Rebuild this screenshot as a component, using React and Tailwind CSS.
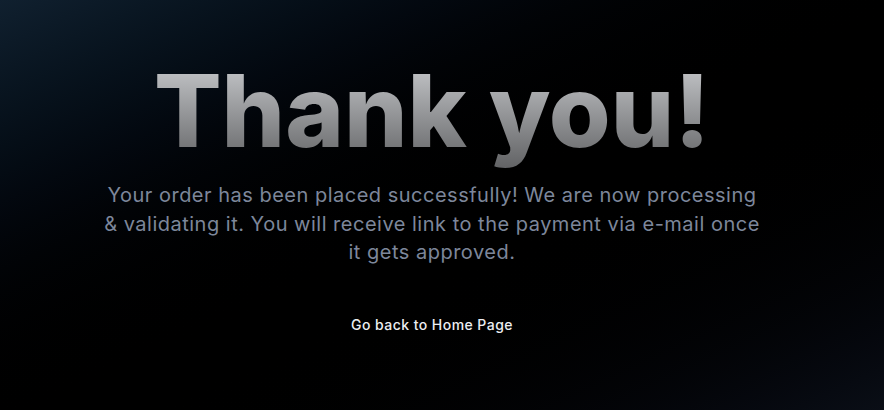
export default function App() {
  return (
    <div className="min-h-screen w-full bg-gradient-to-br from-[#10202f] via-black via-55% to-[#0a0e16] flex flex-col items-center pt-[49px] pr-[20px] font-['Inter',sans-serif]">
      <h1 className="text-[100px] font-extrabold leading-[124px] tracking-[0px] bg-gradient-to-b from-[#d4d6d9] to-[#5e5f61] bg-clip-text text-transparent">
        Thank you!
      </h1>
      <p className="mt-[8px] text-center text-[20px] leading-[28.5px] tracking-[0.5px] text-[#7d879b]">
        Your order has been placed successfully! We are now processing
        <br />
        &amp; validating it. You will receive link to the payment via e-mail once
        <br />
        it gets approved.
      </p>
      <a href="#" className="mt-[47px] text-[14px] font-medium tracking-[0.45px] text-[#eceef2]">
        Go back to Home Page
      </a>
    </div>
  );
}
